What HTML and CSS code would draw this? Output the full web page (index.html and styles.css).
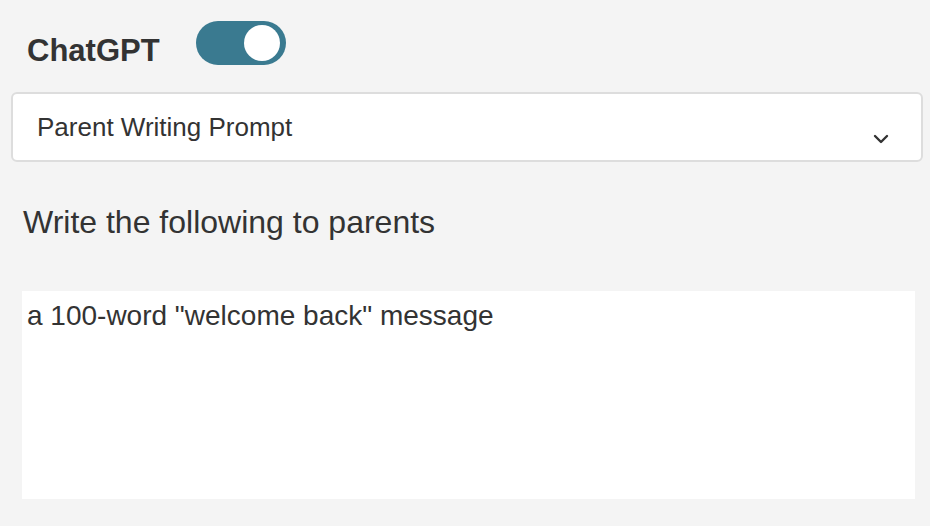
FILE: index.html
```html
<!DOCTYPE html>
<html lang="en">
<head>
    <meta charset="UTF-8">
    <meta name="viewport" content="width=device-width, initial-scale=1.0">
    <title>ChatGPT Prompt</title>
    <link rel="stylesheet" href="styles.css">
</head>
<body>
    <div class="header">
        <h2 class="title">ChatGPT</h2>
        <!-- on/off switch -->
        <label class="switch">
            <input type="checkbox" checked>
            <span class="slider"></span>
        </label>
    </div>

    <div class="prompt-select">
        <span class="prompt-name">Parent Writing Prompt</span>
        <svg class="chevron" width="16" height="10" viewBox="0 0 16 10">
            <path d="M2 2 L8 8 L14 2" fill="none" stroke="#333" stroke-width="2.4" stroke-linecap="round" stroke-linejoin="round"/>
        </svg>
    </div>

    <p class="prompt-label">Write the following to parents</p>

    <textarea class="prompt-text">a 100-word "welcome back" message</textarea>
</body>
</html>
```

FILE: styles.css
```css
body {
    font-family: "Liberation Sans", Arial, sans-serif;
    margin: 0;
    padding: 0;
    background-color: #f4f4f4;
    color: #333;
}
.header {
    display: flex;
    align-items: flex-start;
    padding: 21px 0 0 27px;
}
.title {
    margin: 12px 0 0 0;
    font-size: 31px;
    font-weight: bold;
    line-height: 36px;
    color: #333;
}
.switch {
    position: relative;
    display: inline-block;
    width: 90px;
    height: 44px;
    margin-left: 36px;
}
.switch input {
    display: none;
}
.slider {
    position: absolute;
    inset: 0;
    background-color: #3a7a90;
    border-radius: 22px;
    cursor: pointer;
}
.slider:before {
    content: "";
    position: absolute;
    width: 36px;
    height: 36px;
    left: 4px;
    top: 4px;
    background-color: white;
    border-radius: 50%;
}
.switch input:checked + .slider:before {
    left: 48px;
}
.prompt-select {
    display: flex;
    align-items: center;
    justify-content: space-between;
    height: 66px;
    margin: 23px 7px 0 11px;
    padding: 0 32px 0 24px;
    background-color: white;
    border: 2px solid #ddd;
    border-radius: 6px;
}
.prompt-name {
    font-size: 26px;
}
.chevron {
    margin-top: 24px;
}
.prompt-label {
    margin: 40px 0 0 23px;
    font-size: 32px;
    line-height: 40px;
}
.prompt-text {
    display: block;
    box-sizing: border-box;
    width: 893px;
    height: 208px;
    margin: 49px 0 0 22px;
    padding: 9px 5px;
    border: none;
    outline: none;
    resize: none;
    background-color: white;
    font-family: "Liberation Sans", Arial, sans-serif;
    font-size: 28px;
    color: #333;
}
```
